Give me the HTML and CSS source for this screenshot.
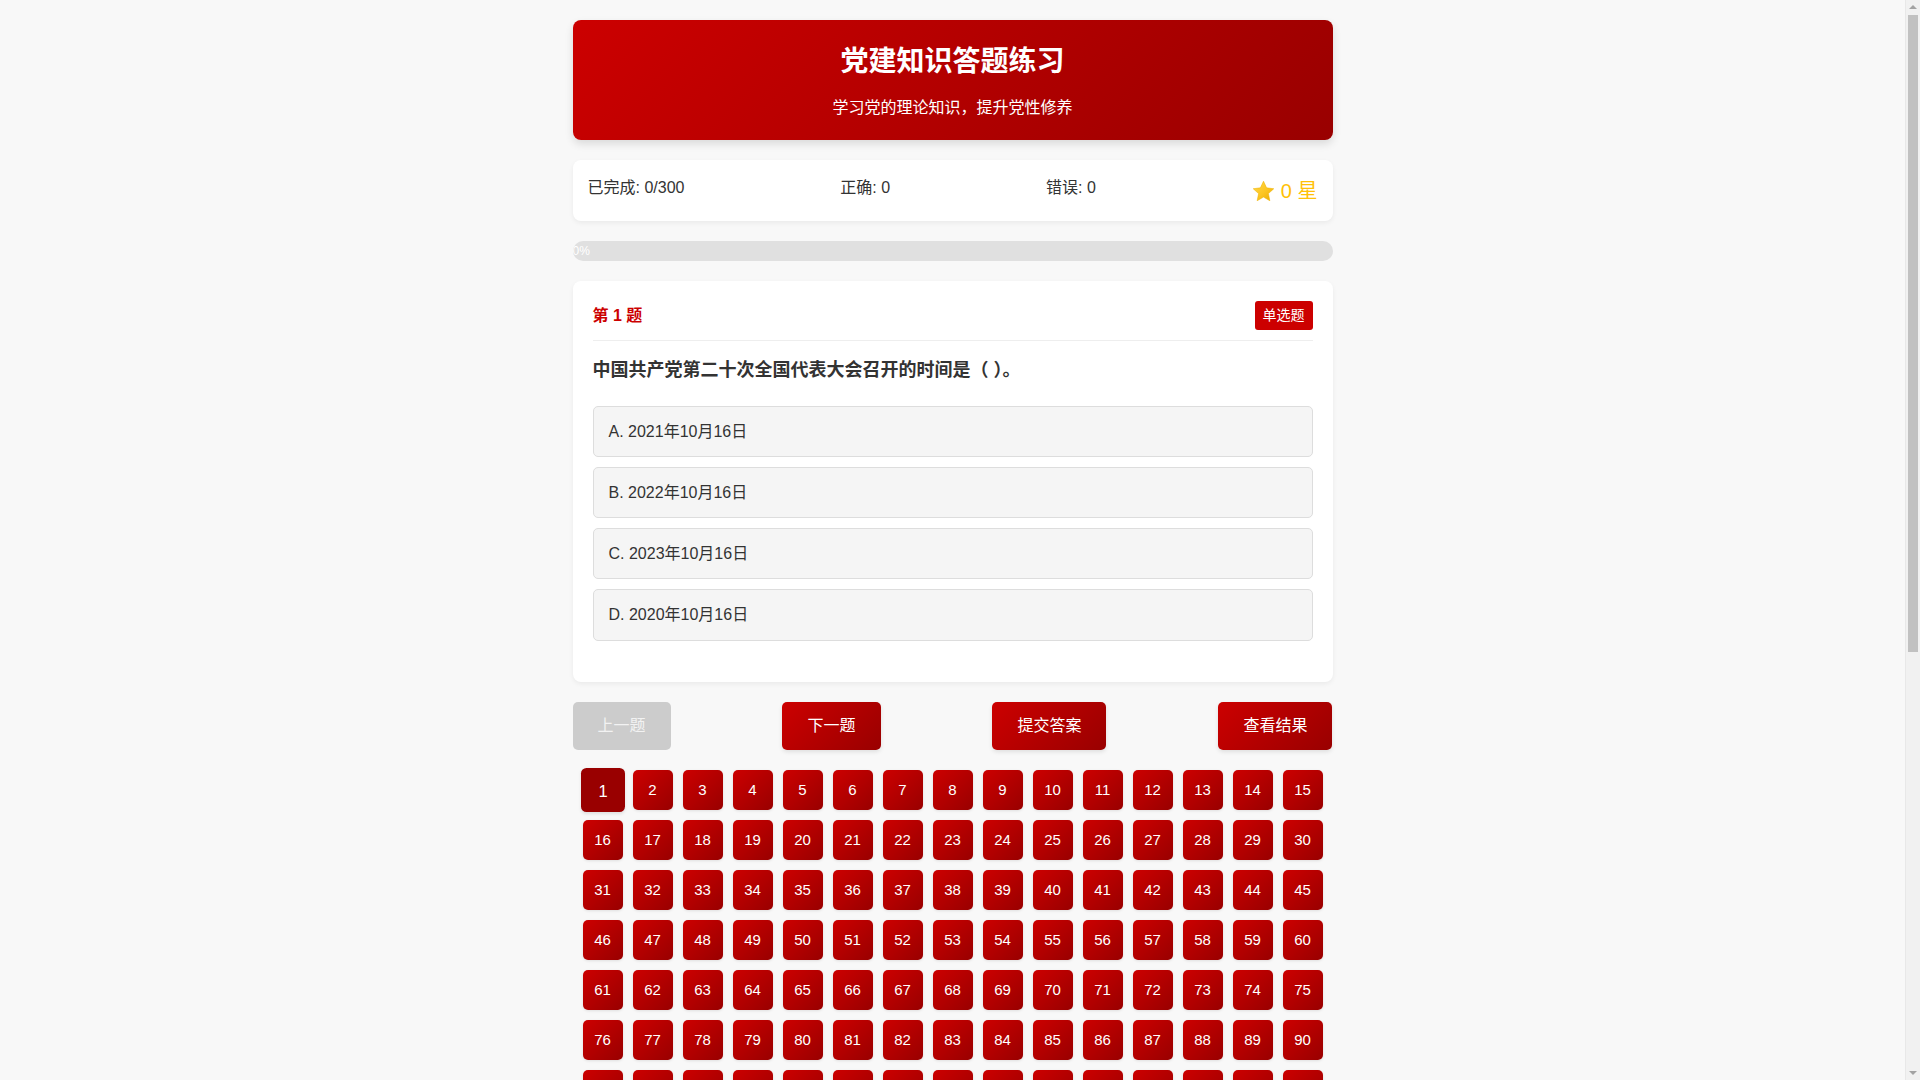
FILE: index.html
```html
<!DOCTYPE html>
<html lang="zh-CN">
<head>
<meta charset="utf-8">
<title>党建知识答题练习</title>
<link rel="stylesheet" href="styles.css">
</head>
<body>
<div class="container">
  <header class="header">
    <h1 class="title">党建知识答题练习</h1>
    <p class="subtitle">学习党的理论知识，提升党性修养</p>
  </header>

  <section class="stats">
    <div class="stat">已完成: 0/300</div>
    <div class="stat">正确: 0</div>
    <div class="stat">错误: 0</div>
    <div class="stars">
      <svg class="star" viewBox="0 0 24 24" width="23" height="23" aria-hidden="true">
        <defs>
          <linearGradient id="sg" x1="0" y1="0" x2="1" y2="1">
            <stop offset="0" stop-color="#ffd84a"/>
            <stop offset="0.55" stop-color="#fcc521"/>
            <stop offset="1" stop-color="#e9a800"/>
          </linearGradient>
        </defs>
        <path d="M12 1.3l3.2 6.9 7.5.9-5.6 5.1 1.5 7.4L12 17.8l-6.6 3.8 1.5-7.4L1.3 9.1l7.5-.9z" fill="url(#sg)" stroke="#f0b400" stroke-width="0.6" stroke-linejoin="round"/>
      </svg>
      <span class="star-text">0 星</span>
    </div>
  </section>

  <div class="progress"><div class="progress-fill">0%</div></div>

  <section class="question-card">
    <div class="q-head">
      <div class="q-num">第 1 题</div>
      <div class="q-type">单选题</div>
    </div>
    <div class="q-text">中国共产党第二十次全国代表大会召开的时间是（ ）。</div>
    <div class="options">
      <div class="option">A. 2021年10月16日</div>
      <div class="option">B. 2022年10月16日</div>
      <div class="option">C. 2023年10月16日</div>
      <div class="option">D. 2020年10月16日</div>
    </div>
  </section>

  <div class="actions">
    <button class="btn btn-disabled">上一题</button>
    <button class="btn">下一题</button>
    <button class="btn">提交答案</button>
    <button class="btn">查看结果</button>
  </div>

  <div class="nav-grid">
    <button class="num active">1</button><button class="num">2</button><button class="num">3</button><button class="num">4</button><button class="num">5</button><button class="num">6</button><button class="num">7</button><button class="num">8</button><button class="num">9</button><button class="num">10</button><button class="num">11</button><button class="num">12</button><button class="num">13</button><button class="num">14</button><button class="num">15</button>
    <button class="num">16</button><button class="num">17</button><button class="num">18</button><button class="num">19</button><button class="num">20</button><button class="num">21</button><button class="num">22</button><button class="num">23</button><button class="num">24</button><button class="num">25</button><button class="num">26</button><button class="num">27</button><button class="num">28</button><button class="num">29</button><button class="num">30</button>
    <button class="num">31</button><button class="num">32</button><button class="num">33</button><button class="num">34</button><button class="num">35</button><button class="num">36</button><button class="num">37</button><button class="num">38</button><button class="num">39</button><button class="num">40</button><button class="num">41</button><button class="num">42</button><button class="num">43</button><button class="num">44</button><button class="num">45</button>
    <button class="num">46</button><button class="num">47</button><button class="num">48</button><button class="num">49</button><button class="num">50</button><button class="num">51</button><button class="num">52</button><button class="num">53</button><button class="num">54</button><button class="num">55</button><button class="num">56</button><button class="num">57</button><button class="num">58</button><button class="num">59</button><button class="num">60</button>
    <button class="num">61</button><button class="num">62</button><button class="num">63</button><button class="num">64</button><button class="num">65</button><button class="num">66</button><button class="num">67</button><button class="num">68</button><button class="num">69</button><button class="num">70</button><button class="num">71</button><button class="num">72</button><button class="num">73</button><button class="num">74</button><button class="num">75</button>
    <button class="num">76</button><button class="num">77</button><button class="num">78</button><button class="num">79</button><button class="num">80</button><button class="num">81</button><button class="num">82</button><button class="num">83</button><button class="num">84</button><button class="num">85</button><button class="num">86</button><button class="num">87</button><button class="num">88</button><button class="num">89</button><button class="num">90</button>
    <button class="num">91</button><button class="num">92</button><button class="num">93</button><button class="num">94</button><button class="num">95</button><button class="num">96</button><button class="num">97</button><button class="num">98</button><button class="num">99</button><button class="num">100</button><button class="num">101</button><button class="num">102</button><button class="num">103</button><button class="num">104</button><button class="num">105</button>
    <button class="num">106</button><button class="num">107</button><button class="num">108</button><button class="num">109</button><button class="num">110</button><button class="num">111</button><button class="num">112</button><button class="num">113</button><button class="num">114</button><button class="num">115</button><button class="num">116</button><button class="num">117</button><button class="num">118</button><button class="num">119</button><button class="num">120</button>
    <button class="num">121</button><button class="num">122</button><button class="num">123</button><button class="num">124</button><button class="num">125</button><button class="num">126</button><button class="num">127</button><button class="num">128</button><button class="num">129</button><button class="num">130</button><button class="num">131</button><button class="num">132</button><button class="num">133</button><button class="num">134</button><button class="num">135</button>
    <button class="num">136</button><button class="num">137</button><button class="num">138</button><button class="num">139</button><button class="num">140</button><button class="num">141</button><button class="num">142</button><button class="num">143</button><button class="num">144</button><button class="num">145</button><button class="num">146</button><button class="num">147</button><button class="num">148</button><button class="num">149</button><button class="num">150</button>
    <button class="num">151</button><button class="num">152</button><button class="num">153</button><button class="num">154</button><button class="num">155</button><button class="num">156</button><button class="num">157</button><button class="num">158</button><button class="num">159</button><button class="num">160</button><button class="num">161</button><button class="num">162</button><button class="num">163</button><button class="num">164</button><button class="num">165</button>
    <button class="num">166</button><button class="num">167</button><button class="num">168</button><button class="num">169</button><button class="num">170</button><button class="num">171</button><button class="num">172</button><button class="num">173</button><button class="num">174</button><button class="num">175</button><button class="num">176</button><button class="num">177</button><button class="num">178</button><button class="num">179</button><button class="num">180</button>
    <button class="num">181</button><button class="num">182</button><button class="num">183</button><button class="num">184</button><button class="num">185</button><button class="num">186</button><button class="num">187</button><button class="num">188</button><button class="num">189</button><button class="num">190</button><button class="num">191</button><button class="num">192</button><button class="num">193</button><button class="num">194</button><button class="num">195</button>
    <button class="num">196</button><button class="num">197</button><button class="num">198</button><button class="num">199</button><button class="num">200</button><button class="num">201</button><button class="num">202</button><button class="num">203</button><button class="num">204</button><button class="num">205</button><button class="num">206</button><button class="num">207</button><button class="num">208</button><button class="num">209</button><button class="num">210</button>
    <button class="num">211</button><button class="num">212</button><button class="num">213</button><button class="num">214</button><button class="num">215</button><button class="num">216</button><button class="num">217</button><button class="num">218</button><button class="num">219</button><button class="num">220</button><button class="num">221</button><button class="num">222</button><button class="num">223</button><button class="num">224</button><button class="num">225</button>
    <button class="num">226</button><button class="num">227</button><button class="num">228</button><button class="num">229</button><button class="num">230</button><button class="num">231</button><button class="num">232</button><button class="num">233</button><button class="num">234</button><button class="num">235</button><button class="num">236</button><button class="num">237</button><button class="num">238</button><button class="num">239</button><button class="num">240</button>
    <button class="num">241</button><button class="num">242</button><button class="num">243</button><button class="num">244</button><button class="num">245</button><button class="num">246</button><button class="num">247</button><button class="num">248</button><button class="num">249</button><button class="num">250</button><button class="num">251</button><button class="num">252</button><button class="num">253</button><button class="num">254</button><button class="num">255</button>
    <button class="num">256</button><button class="num">257</button><button class="num">258</button><button class="num">259</button><button class="num">260</button><button class="num">261</button><button class="num">262</button><button class="num">263</button><button class="num">264</button><button class="num">265</button><button class="num">266</button><button class="num">267</button><button class="num">268</button><button class="num">269</button><button class="num">270</button>
    <button class="num">271</button><button class="num">272</button><button class="num">273</button><button class="num">274</button><button class="num">275</button><button class="num">276</button><button class="num">277</button><button class="num">278</button><button class="num">279</button><button class="num">280</button><button class="num">281</button><button class="num">282</button><button class="num">283</button><button class="num">284</button><button class="num">285</button>
    <button class="num">286</button><button class="num">287</button><button class="num">288</button><button class="num">289</button><button class="num">290</button><button class="num">291</button><button class="num">292</button><button class="num">293</button><button class="num">294</button><button class="num">295</button><button class="num">296</button><button class="num">297</button><button class="num">298</button><button class="num">299</button><button class="num">300</button>
  </div>
</div>

<div class="scrollbar" aria-hidden="true">
  <div class="sb-arrow sb-up"></div>
  <div class="sb-thumb"></div>
  <div class="sb-arrow sb-down"></div>
</div>
</body>
</html>
```

FILE: styles.css
```css
* {
  box-sizing: border-box;
}

html, body {
  margin: 0;
  padding: 0;
}

body {
  background: #f8f8f8;
  color: #333;
  font-family: "Liberation Sans", "Noto Sans CJK SC", sans-serif;
  font-size: 16px;
  padding-right: 15px;
}

/* browser scrollbar as seen in the capture */
.scrollbar {
  position: fixed;
  top: 0;
  right: 0;
  width: 15px;
  height: 100vh;
  background: #f1f1f1;
  border-left: 1px solid #e8e8e8;
  display: flex;
  flex-direction: column;
  align-items: center;
}

.sb-arrow {
  width: 0;
  height: 0;
  border-left: 4px solid transparent;
  border-right: 4px solid transparent;
}

.sb-up {
  margin-top: 5px;
  border-bottom: 4px solid #a3a3a3;
}

.sb-down {
  position: absolute;
  bottom: 5px;
  border-top: 4px solid #a3a3a3;
}

.sb-thumb {
  margin-top: 6px;
  width: 10px;
  height: 637px;
  background: #c1c1c1;
}

.container {
  max-width: 760px;
  margin: 0 auto;
  padding: 20px 0;
}

.header {
  background: linear-gradient(135deg, #cc0000, #990000);
  color: #fff;
  border-radius: 8px;
  padding: 22px 20px 20px;
  text-align: center;
  box-shadow: 0 4px 8px rgba(0, 0, 0, 0.12);
}

.title {
  margin: 0 0 14px;
  font-size: 28px;
  line-height: 40px;
  font-weight: bold;
}

.subtitle {
  margin: 0;
  font-size: 16px;
  line-height: 24px;
}

.stats {
  margin-top: 20px;
  background: #fff;
  border-radius: 8px;
  padding: 16px 15px 15px;
  display: flex;
  justify-content: space-between;
  box-shadow: 0 2px 5px rgba(0, 0, 0, 0.06);
}

.stat {
  font-size: 16px;
  line-height: 24px;
  color: #333;
}

.stars {
  display: flex;
  align-items: center;
  gap: 6px;
  height: 30px;
  color: #ffc107;
}

.star {
  display: block;
}

.star-text {
  font-size: 20px;
  line-height: 30px;
}

.progress {
  margin-top: 20px;
  height: 20px;
  background: #e0e0e0;
  border-radius: 10px;
  overflow: hidden;
}

.progress-fill {
  width: 0;
  height: 20px;
  background: linear-gradient(90deg, #cc0000, #990000);
  color: #fff;
  font-size: 12px;
  line-height: 20px;
  text-align: center;
  white-space: nowrap;
}

.question-card {
  margin-top: 20px;
  background: #fff;
  border-radius: 8px;
  padding: 20px;
  box-shadow: 0 2px 5px rgba(0, 0, 0, 0.06);
}

.q-head {
  display: flex;
  justify-content: space-between;
  align-items: center;
  padding-bottom: 10px;
  border-bottom: 1px solid #eee;
  margin-bottom: 15px;
}

.q-num {
  color: #cc0000;
  font-weight: bold;
  font-size: 16px;
  line-height: 24px;
}

.q-type {
  background: #cc0000;
  color: #fff;
  font-size: 14px;
  line-height: 21px;
  padding: 4px 8px;
  border-radius: 3px;
}

.q-text {
  font-size: 18px;
  font-weight: bold;
  line-height: 1.6;
  color: #333;
  margin-bottom: 21px;
}

.options {
  display: flex;
  flex-direction: column;
  gap: 10px;
  margin-bottom: 21px;
}

.option {
  background: #f5f5f5;
  border: 1px solid #ddd;
  border-radius: 5px;
  padding: 15px;
  font-size: 16px;
  line-height: 1.2;
  color: #333;
}

.actions {
  margin-top: 20px;
  display: flex;
  justify-content: space-between;
}

.btn {
  font-family: inherit;
  font-size: 16px;
  line-height: 24px;
  padding: 12px 25px;
  border: none;
  border-radius: 5px;
  color: #fff;
  background: linear-gradient(135deg, #cc0000, #990000);
  box-shadow: 0 2px 4px rgba(0, 0, 0, 0.1);
  cursor: pointer;
}

.btn-disabled {
  background: #cccccc;
  color: #f2f2f2;
  box-shadow: none;
  cursor: not-allowed;
}

.nav-grid {
  margin-top: 20px;
  display: grid;
  grid-template-columns: repeat(15, 40px);
  grid-auto-rows: 40px;
  gap: 10px;
  justify-content: center;
}

.num {
  font-family: inherit;
  width: 40px;
  height: 40px;
  padding: 0;
  border: none;
  border-radius: 5px;
  color: #fff;
  font-size: 15px;
  background: linear-gradient(135deg, #cc0000, #990000);
  box-shadow: 0 1px 3px rgba(0, 0, 0, 0.1);
  cursor: pointer;
}

.num.active {
  background: #990000;
  transform: scale(1.1);
}
```
